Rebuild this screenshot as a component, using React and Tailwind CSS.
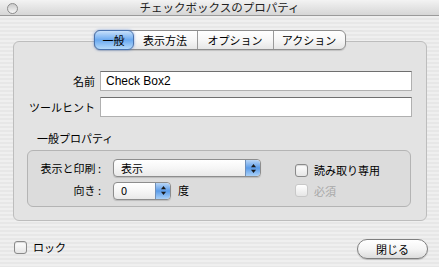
import React from 'react';

// Aqua-style "check box properties" dialog
const tabs = ['一般', '表示方法', 'オプション', 'アクション'];

function Checkbox({ label, disabled }) {
  return (
    <label className={'flex items-center gap-[6px] ' + (disabled ? 'text-[#a8a8a8]' : 'text-black')}>
      <span
        className={
          'w-[13px] h-[13px] rounded-[3px] border bg-gradient-to-b from-white to-[#e6e6e6] ' +
          (disabled ? 'border-[#c8c8c8]' : 'border-[#8a8a8a] shadow-[inset_0_1px_1px_rgba(0,0,0,0.15)]')
        }
      />
      <span>{label}</span>
    </label>
  );
}

function PopupArrows() {
  return (
    <span className="w-[15px] h-full flex items-center justify-center rounded-r-[4px] bg-gradient-to-b from-[#b9d6f6] via-[#5a9be8] to-[#a9d0f7] border-l border-[#6f8fb8]">
      <svg width="5" height="9" viewBox="0 0 5 9">
        <path d="M2.5 0 L5 3.2 L0 3.2 Z" fill="#1a1a1a" />
        <path d="M2.5 9 L5 5.8 L0 5.8 Z" fill="#1a1a1a" />
      </svg>
    </span>
  );
}

function Popup({ value, width }) {
  return (
    <div className={'h-[18px] flex items-center rounded-[4px] border border-[#8d8d8d] bg-gradient-to-b from-white via-[#f6f6f6] to-[#e9e9e9] shadow-[0_1px_1px_rgba(0,0,0,0.15)] ' + width}>
      <span className="flex-1 pl-[7px] leading-none">{value}</span>
      <PopupArrows />
    </div>
  );
}

export default function App() {
  return (
    <div
      className="w-[439px] h-[267px] flex flex-col overflow-hidden text-[11px] text-black bg-[repeating-linear-gradient(180deg,#efefef_0px,#efefef_2px,#e7e7e7_2px,#e7e7e7_4px)]"
      style={{ fontFamily: '"Noto Sans CJK JP", "Liberation Sans", sans-serif' }}
    >
      {/* title bar */}
      <div className="relative h-[16px] flex items-center justify-center border-b border-[#9a9a9a] bg-gradient-to-b from-[#f3f3f3] to-[#d6d6d6]">
        <span className="absolute left-[7px] top-[3px] w-[11px] h-[11px] rounded-full border border-[#8c8c8c] bg-gradient-to-b from-[#c9c9c9] to-[#f7f7f7]" />
        <span className="text-[11.5px] leading-none text-[#222]">チェックボックスのプロパティ</span>
      </div>

      {/* tabs */}
      <div className="relative z-10 mt-[14px] flex justify-center">
        <div className="flex h-[20px] rounded-[6px] border border-[#8e8e8e] bg-gradient-to-b from-white via-[#f7f7f7] to-[#e6e6e6] shadow-[0_1px_1px_rgba(0,0,0,0.15)] whitespace-nowrap">
          {tabs.map((t, i) => (
            <div
              key={t}
              className={
                i === 0
                  ? 'w-[40px] -my-px -ml-px flex items-center justify-center rounded-[6px] border border-[#4b73ad] bg-gradient-to-b from-[#c8e1fb] via-[#6aa9ef] to-[#b5dafa] shadow-[0_0_3px_rgba(60,110,200,0.6)]'
                  : 'flex items-center justify-center ' +
                    (i === 1 ? 'w-[63px]' : i === 2 ? 'w-[76px] border-l border-[#9a9a9a]' : 'w-[72px] border-l border-[#9a9a9a]')
              }
            >
              {t}
            </div>
          ))}
        </div>
      </div>

      {/* panel */}
      <div className="-mt-[9px] ml-[13px] mr-[12px] h-[180px] rounded-[6px] border border-[#bdbdbd] bg-[#e3e3e3] pt-[29px]">
        <div className="flex flex-col gap-[6px]">
          <div className="flex items-center gap-[5px]">
            <span className="w-[81px] text-right">名前</span>
            <div className="w-[312px] h-[20px] flex items-center px-[5px] bg-white border border-[#b0b0b0] border-t-[#6f6f6f] text-[12px]" style={{ fontFamily: '"Liberation Sans", sans-serif' }}>
              Check Box2
            </div>
          </div>
          <div className="flex items-center gap-[5px]">
            <span className="w-[81px] text-right">ツールヒント</span>
            <div className="w-[312px] h-[20px] bg-white border border-[#b0b0b0] border-t-[#6f6f6f]" />
          </div>
        </div>

        <div className="ml-[23px] mt-[16px] leading-none">一般プロパティ</div>

        <div className="ml-[13px] mr-[15px] mt-[6px] h-[57px] rounded-[6px] border border-[#b4b4b4] bg-[#dcdcdc] flex pt-[8px]">
          <div className="flex flex-col gap-[4px]">
            <div className="flex items-center gap-[12px] h-[18px]">
              <span className="w-[73px] text-right">表示と印刷 :</span>
              <Popup value="表示" width="w-[148px]" />
            </div>
            <div className="flex items-center gap-[12px] h-[19px]">
              <span className="w-[73px] text-right">向き :</span>
              <Popup value="0" width="w-[58px]" />
              <span className="-ml-[5px]">度</span>
            </div>
          </div>
          <div className="ml-[34px] pt-[3px] flex flex-col gap-[4px]">
            <Checkbox label="読み取り専用" />
            <Checkbox label="必須" disabled />
          </div>
        </div>
      </div>

      {/* footer */}
      <div className="flex items-center justify-between pl-[14px] pr-[11px] mt-[15px]">
        <Checkbox label="ロック" />
        <button className="w-[71px] h-[20px] mt-[3px] rounded-full border border-[#7f7f7f] bg-gradient-to-b from-white via-[#f5f5f5] to-[#dcdcdc] shadow-[0_1px_1px_rgba(0,0,0,0.2)] text-[11px]">
          閉じる
        </button>
      </div>
    </div>
  );
}
